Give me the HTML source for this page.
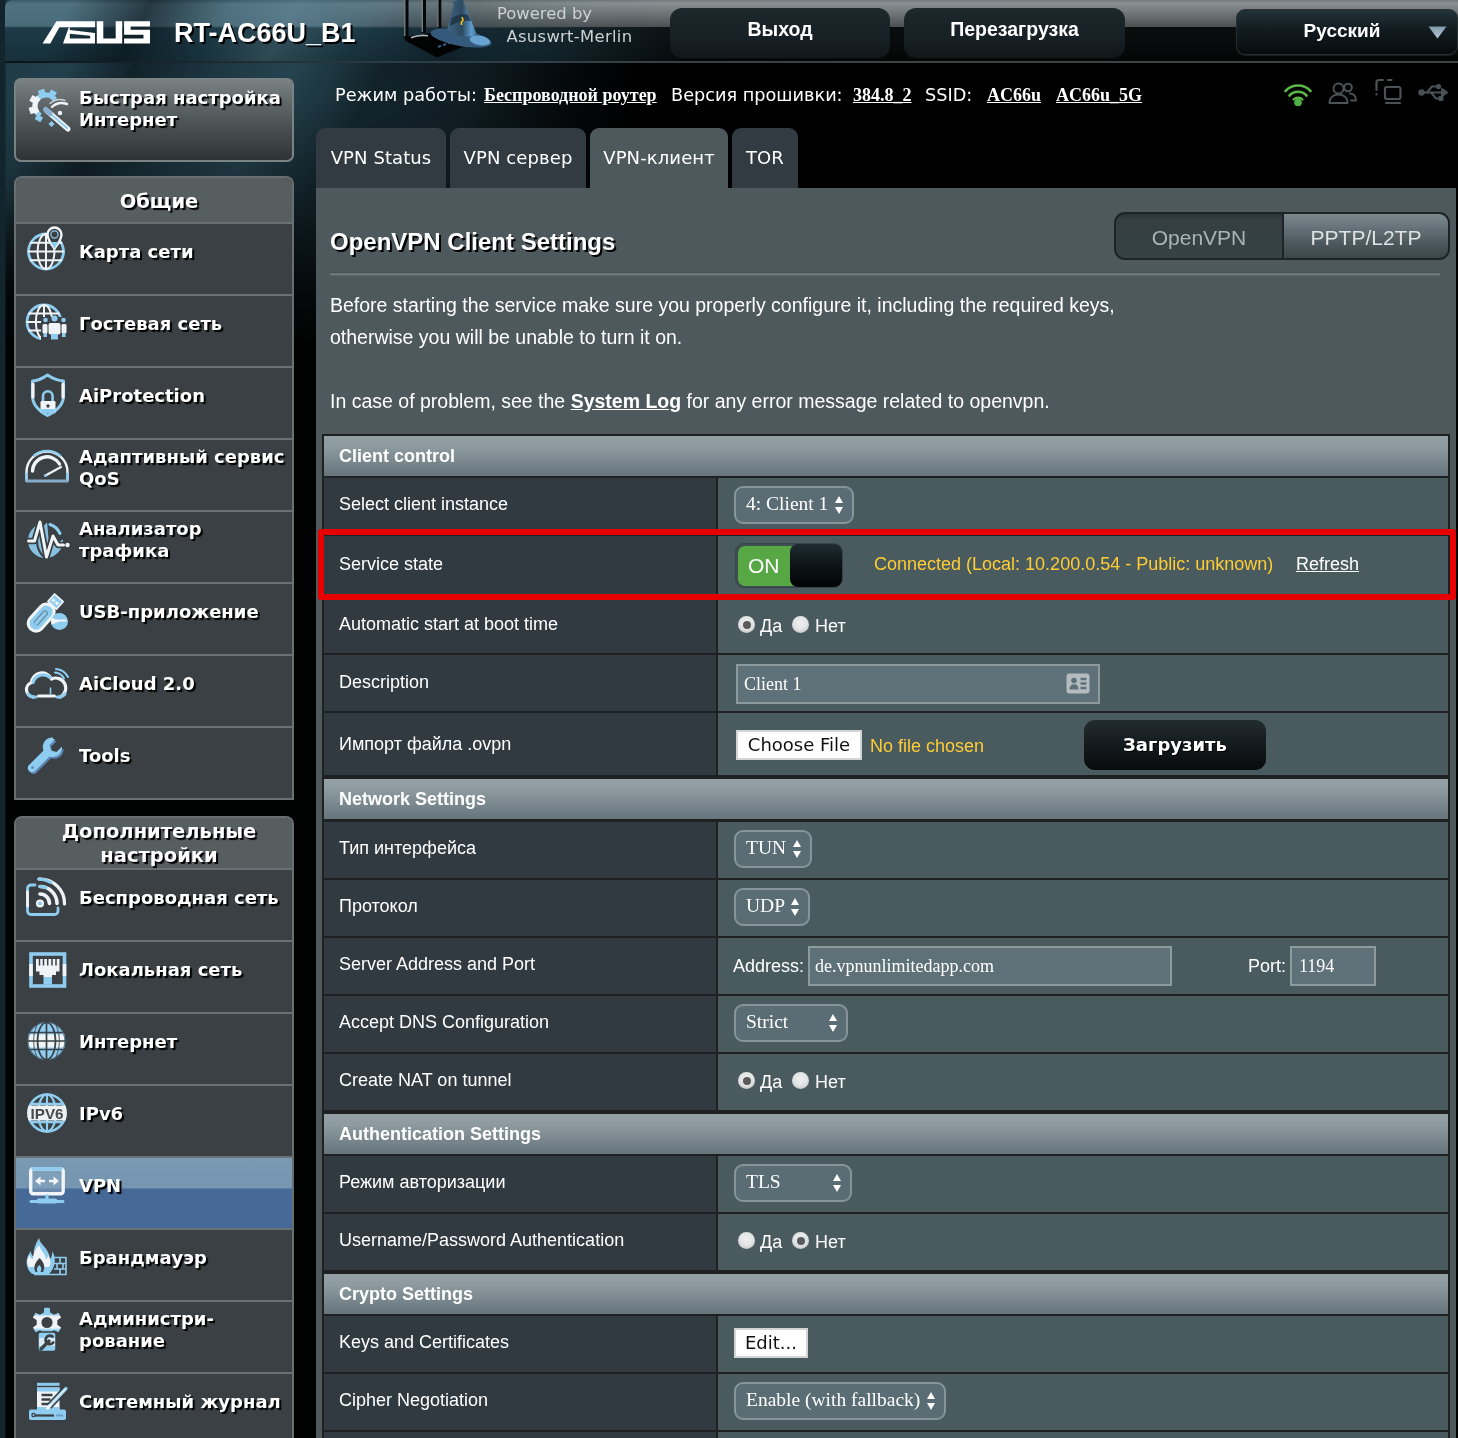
<!DOCTYPE html>
<html lang="ru">
<head>
<meta charset="utf-8">
<title>ASUS Wireless Router RT-AC66U_B1 - OpenVPN Client Settings</title>
<style>
*{box-sizing:border-box;margin:0;padding:0}
html,body{width:1458px;height:1438px;overflow:hidden;background:#0a1114}
body{position:relative;font-family:"Liberation Sans",Arial,sans-serif;color:#fff}
.abs{position:absolute}
#wrap{position:absolute;left:0;top:0;width:1458px;height:1438px;overflow:hidden;will-change:transform}
/* ---------- background ---------- */
#bg{left:0;top:0;width:1458px;height:1438px;
 background:
  linear-gradient(90deg,#13252c 0,#13252c 5px,rgba(0,0,0,0) 6px),
  linear-gradient(180deg,rgba(0,0,0,0) 0,rgba(0,0,0,0) 100px,rgba(0,0,0,.3) 200px,rgba(0,0,0,.8) 290px,#010202 350px),
  linear-gradient(90deg,rgba(0,0,0,0) 0,rgba(0,0,0,0) 330px,#000 640px),
  linear-gradient(118deg,#1d3742 0,#22404c 90px,#12222a 150px,#1e3843 230px,#25434f 290px,#152830 370px,#1c343f 470px,#0a1418 640px,#000 800px);}
#hdr{left:5px;top:0;width:1453px;height:61px;border-top-left-radius:7px;overflow:hidden;
 background:linear-gradient(180deg,#3c5a66 0,#4f7281 4px,#4a6b7a 26px,#1d3a47 28px,#17303a 61px)}
#hdrS{left:5px;top:0;width:700px;height:61px;border-top-left-radius:7px;overflow:hidden;
 background:linear-gradient(118deg,rgba(0,0,0,0) 0,rgba(0,0,0,0) 60px,rgba(5,12,16,.55) 130px,rgba(5,12,16,.0) 200px,rgba(150,180,195,.18) 260px,rgba(0,0,0,0) 330px,rgba(5,12,16,.45) 420px,rgba(0,0,0,0) 520px)}
#hdrR{left:320px;top:0;width:1138px;height:28px;
 background:linear-gradient(180deg,#70787b 0,#8b9092 3px,#6e7375 14px,#4b4f51 27px,#2a2d2e 28px);
 -webkit-mask-image:linear-gradient(90deg,transparent 0,rgba(0,0,0,.6) 120px,rgba(0,0,0,.8) 220px,#000 340px);mask-image:linear-gradient(90deg,transparent 0,rgba(0,0,0,.6) 120px,rgba(0,0,0,.8) 220px,#000 340px)}
#hdrB{left:480px;top:27px;width:978px;height:34px;
 background:linear-gradient(180deg,#0b0e0f 0,#050707 100%);
 -webkit-mask-image:linear-gradient(90deg,transparent 0,rgba(0,0,0,.5) 100px,#000 220px);mask-image:linear-gradient(90deg,transparent 0,rgba(0,0,0,.5) 100px,#000 220px)}
#hdrL{left:5px;top:61px;width:1453px;height:2px;background:linear-gradient(90deg,#0c1418 0,#2c3d45 400px,#3c4446 900px,#3c4446 100%)}
/* ---------- header ---------- */
#model{left:174px;top:15px;font-weight:bold;font-size:27px;line-height:36px;white-space:nowrap;text-shadow:2px 2px 0 #000}
#powered{left:497px;top:2px;width:136px;font-family:"DejaVu Sans",Verdana,sans-serif;font-size:16.4px;line-height:23.5px;color:#cdd1d2;text-align:left;white-space:nowrap}
.hbtn{top:8px;height:49px;border-radius:12px;background:linear-gradient(180deg,#1c272b 0,#19232700 0),linear-gradient(180deg,#1d282c 0,#172024 60%,#11181b 100%);
 font-weight:bold;font-size:19.5px;text-align:center;line-height:42px;white-space:nowrap;box-shadow:0 1px 0 rgba(255,255,255,.08)}
/* ---------- status line ---------- */
#status{left:335px;top:82px;height:26px;line-height:26px;font-family:"DejaVu Sans",Verdana,sans-serif;font-size:17.7px;white-space:nowrap}
#status span,#status a{position:absolute;top:0}
#status a{font-family:"Liberation Serif","Times New Roman",serif;font-weight:bold;font-size:18px;color:#fff;text-decoration:underline}
/* ---------- tabs ---------- */
.tab{top:128px;height:60px;background:#323b42;border-radius:9px 9px 0 0;font-family:"DejaVu Sans",Verdana,sans-serif;font-size:18px;
 line-height:60px;text-align:center;white-space:nowrap;letter-spacing:.1px}
.tab.on{background:#4d595d}
/* ---------- sidebar ---------- */
.qbox{left:14px;top:78px;width:280px;height:84px;border:2px solid #7b8284;border-radius:7px;
 background:linear-gradient(180deg,#7a8183 0,#5f6668 30%,#474e50 62%,#2e3436 100%);
 font-family:"DejaVu Sans",Verdana,sans-serif;font-weight:bold;font-size:18px;line-height:22px;text-shadow:2px 2px 1px #000}
.qbox span{position:absolute;left:63px;top:7px;white-space:nowrap}
.qbox svg{position:absolute;left:0;top:0;width:62px;height:62px}
.sbox{left:14px;width:280px;border:2px solid #686f71;border-bottom:none;border-radius:8px 8px 0 0;background:#3a4043;overflow:hidden}
.shead{width:100%;background:#575e60;font-family:"DejaVu Sans",Verdana,sans-serif;font-weight:bold;font-size:19.5px;text-align:center;line-height:24px;
 padding:12px 0 0 10px;text-shadow:2px 2px 1px #000;border-bottom:2px solid #6a7173;white-space:nowrap}
.shead.h2{padding-top:2px}
.mi{position:relative;width:100%;height:72px;border-bottom:2px solid #6a7173;font-family:"DejaVu Sans",Verdana,sans-serif;font-weight:bold;font-size:18px;
 line-height:22px;text-shadow:2px 2px 1px #000}
.mi span{position:absolute;left:63px;top:17px;white-space:nowrap}
.mi span.two{top:6px}
.mi svg{position:absolute;left:0;top:0;width:62px;height:62px}
.mi svg text{text-shadow:none}
.mi.on{background:linear-gradient(180deg,#7a9ab4 0,#7595b0 30px,#476998 31px,#476998 100%)}
/* ---------- content ---------- */
#panel{left:316px;top:188px;width:1140px;height:1250px;background:#4d595d}
#title{left:330px;top:226px;font-weight:bold;font-size:24px;line-height:32px;white-space:nowrap;text-shadow:2px 2px 0 #000}
.desc{left:330px;font-size:19.5px;line-height:32px;white-space:nowrap}
.desc a{color:#fff;font-weight:bold;text-decoration:underline}
#hr{left:330px;top:272px;width:1110px;height:4px;background:linear-gradient(180deg,#465054 0,#465054 1px,#6c797e 1px,#6c797e 3px,#586468 3px)}
/* table */
.th{left:324px;width:1124px;height:40px;background:linear-gradient(180deg,#93a1a6 0,#8e9ca1 25%,#66757c 100%);
 font-weight:bold;font-size:18px;line-height:41px;padding-left:15px;white-space:nowrap;overflow:hidden}
.lc{left:324px;width:392px;background:#323a41}
.vc{left:718px;width:730px;background:#4a5b60}
.lb{left:339px;font-size:18px;line-height:22px;white-space:nowrap}
.sel{border:2px solid #87949a;border-radius:9px;background:#5b6d74;
 font-family:"Liberation Serif","Times New Roman",serif;font-size:19.5px;line-height:31px;padding-left:10px;white-space:nowrap}
.sel i{position:absolute;right:8px;top:8px;width:9px;height:18px}
.sel i:before,.sel i:after{content:"";position:absolute;left:0;border-left:4.5px solid transparent;border-right:4.5px solid transparent}
.sel i:before{top:0;border-bottom:7px solid #fff}
.sel i:after{bottom:0;border-top:7px solid #fff}
.inp{height:40px;border:2px solid #8d9a9e;background:#5f7178;font-family:"Liberation Serif","Times New Roman",serif;font-size:18px;
 line-height:36px;padding-left:5px;white-space:nowrap}
.rad{width:17px;height:17px;border-radius:50%;background:radial-gradient(circle at 50% 40%,#f0f0f0 0,#e2e3e3 50%,#c2c5c6 85%,#9da3a5 100%)}
.rad.ck:after{content:"";position:absolute;left:4.500px;top:4.500px;width:8px;height:8px;border-radius:50%;background:#585a5b}
.rl{font-size:18px;line-height:22px;white-space:nowrap}
.wbtn{background:#fff;border:2px solid #d4d4d4;color:#111;font-family:"DejaVu Sans",Verdana,sans-serif;font-size:18px;text-align:center;white-space:nowrap}
.dbtn{border-radius:11px;background:linear-gradient(180deg,#222c30 0,#141a1d 50%,#080b0c 100%);font-family:"DejaVu Sans",Verdana,sans-serif;font-weight:bold;font-size:18px;
 text-align:center;white-space:nowrap;text-shadow:1px 1px 0 #000}
.tog{width:108px;height:45px;border-radius:9px;background:#3f4e53;border:1px solid #37454a}
.tog b{position:absolute;left:2px;top:2px;width:60px;height:40px;background:#57a845;border-radius:7px 0 0 7px;font-weight:normal;font-size:21px;line-height:40px;padding-left:10px}
.tog u{position:absolute;left:54px;top:0;width:52px;height:43px;border-radius:8px;background:linear-gradient(180deg,#1e2d33 0,#0d1316 50%,#030404 100%);text-decoration:none}
#lang{background:linear-gradient(180deg,#22333a 0,#16222700 0),linear-gradient(180deg,#22333a 0,#121b1f 45%,#080b0d 100%);border:1px solid #273035;border-radius:9px;line-height:42px;font-size:19px}
#sw{left:1114px;top:212px;width:336px;height:48px;border:2px solid #1d2427;border-radius:11px;overflow:hidden;background:#1d2427;font-size:21px;line-height:47px;text-align:center;white-space:nowrap}
#sw .a{position:absolute;left:0;top:0;width:166px;height:44px;background:linear-gradient(180deg,#283135 0,#353f43 5px,#374246 100%);color:#a9b4b8}
#sw .b{position:absolute;left:168px;top:0;width:164px;height:44px;background:linear-gradient(180deg,#7c898e 0,#66737a 30%,#4a565b 70%,#3c474b 100%);color:#dde2e4}
</style>
</head>
<body>
<div id="wrap">
<div id="bg" class="abs"></div>
<div id="hdr" class="abs"></div>
<div id="hdrS" class="abs"></div>
<div id="hdrR" class="abs"></div>
<div id="hdrB" class="abs"></div>
<div id="hdrL" class="abs"></div>

<!-- HEADER -->
<svg class="abs" style="left:42px;top:21px" width="109" height="24" viewBox="0 0 109 24">
 <g fill="#fff">
  <path d="M0.500 22.400 L14.500 0.300 H53 V6.300 H17.400 L8.300 22.400 Z"/>
  <path d="M26.800 6.300 H27.800 V9 L53 12 V22.400 H21 Z M27.800 12.800 V17.400 H48.200 V14.800 Z" fill-rule="evenodd"/>
  <path d="M54.800 0.300 H61.300 V17.400 H73.700 V0.300 H80.200 V22.400 H54.800 Z"/>
  <path d="M82.100 0.300 H108 V5.500 H88.600 V8.800 H108 V22.400 H82.100 V17.400 H101.500 V13.800 H82.100 Z"/>
 </g>
</svg>
<svg class="abs" style="left:398px;top:0" width="100" height="62" viewBox="0 0 100 62">
 <defs><linearGradient id="hatg" x1="0" y1="0" x2="1" y2="0"><stop offset="0" stop-color="#3f6685"/><stop offset=".5" stop-color="#2c4a60"/><stop offset=".82" stop-color="#5f9ccd"/><stop offset="1" stop-color="#3d6a8e"/></linearGradient></defs>
 <g stroke-linecap="butt">
  <path d="M8.500 0V38" stroke="#050708" stroke-width="4"/><path d="M6.800 0V36" stroke="#7b8589" stroke-width="1.300"/>
  <path d="M26 0V33" stroke="#050708" stroke-width="4"/><path d="M24.300 0V32" stroke="#7b8589" stroke-width="1.300"/>
  <path d="M41.500 0V28" stroke="#050708" stroke-width="3.600"/><path d="M39.900 0V27" stroke="#7b8589" stroke-width="1.200"/>
 </g>
 <path d="M6 37 L42 31.500 L67 46 L39 57.500 L8 41 Z" fill="#020303"/>
 <path d="M13 37.800 q8 -3.500 17 -2" stroke="#aeb6b9" stroke-width="1.600" fill="none"/>
 <path d="M40 47 l3 -1.200 M45 45.200 l3 -1.200 M50 43.400 l3 -1.200" stroke="#2f5d7d" stroke-width="2"/>
 <ellipse cx="63" cy="38" rx="31" ry="8" transform="rotate(10 63 38)" fill="#34597a"/>
 <ellipse cx="82" cy="40.500" rx="10.500" ry="4.800" transform="rotate(10 82 40)" fill="#74b4e6" opacity=".8"/>
 <path d="M60 0 L53 2 L56 4 L49 30 Q62 40 79 35 L65 0 Z" fill="url(#hatg)"/>
 <path d="M53.500 18 Q62 13 70 14.500 L73 21 Q62 20 52 26 Z" fill="#1d2f3d" opacity=".75"/>
 <path d="M64 17l1 3 -1.500 2 0 3" stroke="#f2c318" stroke-width="1.600" fill="none"/>
</svg>
<div id="model" class="abs">RT-AC66U_B1</div>
<div id="powered" class="abs">Powered by<br><span style="position:relative;left:9.500px;top:-1px;letter-spacing:.3px">Asuswrt-Merlin</span></div>
<div class="abs hbtn" style="left:670px;width:220px">Выход</div>
<div class="abs hbtn" style="left:904px;width:221px">Перезагрузка</div>
<div class="abs hbtn" style="left:1236px;width:222px;top:9px;height:46px;padding-right:10px" id="lang">Русский</div>
<svg class="abs" style="left:1428px;top:26px" width="19" height="13" viewBox="0 0 19 13"><defs><linearGradient id="ag" x1="0" y1="0" x2="0" y2="1"><stop offset="0" stop-color="#7f98a8"/><stop offset="1" stop-color="#b7cad6"/></linearGradient></defs><path d="M0.500 0.500H18.500L9.500 12.500Z" fill="url(#ag)"/></svg>
<svg class="abs" style="left:1282px;top:76px" width="172" height="32" viewBox="0 0 172 32" fill="none" stroke-linecap="round" stroke-linejoin="round">
 <g stroke="#5cb848" stroke-width="2.600"><path d="M3.500 15a17 17 0 0 1 25 0"/><path d="M7.500 19.500a11.500 11.500 0 0 1 17 0"/><path d="M11.500 23.500a6.500 6.500 0 0 1 9 0" stroke-width="2.200"/></g><circle cx="16" cy="26.500" r="3.800" fill="#4fb044"/>
 <g stroke="#4b5255" stroke-width="2"><circle cx="56.500" cy="12.500" r="5"/><path d="M47.500 27c0-5.500 4-8.500 9-8.500s9 3 9 8.500z"/><circle cx="66" cy="11.500" r="3.800"/><path d="M68 17.500c4 .5 6 3 6 7h-5"/></g>
 <g stroke="#4b5255" stroke-width="2.200"><path d="M101 4H97a2.500 2.500 0 0 0-2.500 2.500V14"/><path d="M106 4h3.500"/><path d="M94.500 18v.5"/><rect x="103" y="11" width="15.500" height="12" rx="2"/><path d="M104 27h14"/></g>
 <g stroke="#4b5255" stroke-width="2"><path d="M140 16.500h24"/><path d="M160 13l5 3.500-5 3.500z" fill="#4b5255"/><circle cx="139.500" cy="16.500" r="2.200" fill="#4b5255"/><path d="M145 16.500l5-6h5"/><circle cx="156.500" cy="10.500" r="1.600" fill="#4b5255"/><path d="M149 16.500l5 6h4"/><rect x="157.500" y="21" width="3" height="3" fill="#4b5255"/></g>
</svg>

<!-- STATUS -->
<div id="status" class="abs"><span style="left:0">Режим работы:</span><a style="left:149px">Беспроводной роутер</a><span style="left:336px">Версия прошивки:</span><a style="left:518px">384.8_2</a><span style="left:590px">SSID:</span><a style="left:652px">AC66u</a><a style="left:721px">AC66u_5G</a></div>

<!-- TABS -->
<div class="abs tab" style="left:316px;width:130px">VPN Status</div>
<div class="abs tab" style="left:450px;width:136px">VPN сервер</div>
<div class="abs tab on" style="left:590px;width:138px">VPN-клиент</div>
<div class="abs tab" style="left:732px;width:66px">TOR</div>

<!-- PANEL -->
<div id="panel" class="abs"></div>
<div id="title" class="abs">OpenVPN Client Settings</div>
<div id="hr" class="abs"></div>
<div id="sw" class="abs"><div class="a">OpenVPN</div><div class="b">PPTP/L2TP</div></div>
<div class="abs desc" style="top:289px">Before starting the service make sure you properly configure it, including the required keys,</div>
<div class="abs desc" style="top:321px">otherwise you will be unable to turn it on.</div>
<div class="abs desc" style="top:385px">In case of problem, see the <a>System Log</a> for any error message related to openvpn.</div>

<div class="abs" style="left:322px;top:434px;width:1128px;height:1004px;background:#1e2021"></div>
<div class="abs th" style="top:436px">Client control</div>
<div class="abs lc" style="top:478px;height:56px"></div><div class="abs vc" style="top:478px;height:56px"></div>
<div class="abs lb" style="top:492.5px">Select client instance</div>
<div class="abs sel" style="left:734px;top:486px;width:120px;height:38px">4: Client 1<i></i></div>
<div class="abs lc" style="top:536px;height:59px"></div><div class="abs vc" style="top:536px;height:59px"></div>
<div class="abs lb" style="top:552.5px">Service state</div>
<div class="abs tog" style="left:735px;top:543px"><b>ON</b><u></u></div><div class="abs lb" style="left:874px;top:552.5px;color:#ffcc33">Connected (Local: 10.200.0.54 - Public: unknown)</div><div class="abs lb" style="left:1296px;top:552.5px;text-decoration:underline">Refresh</div>
<div class="abs lc" style="top:597px;height:56px"></div><div class="abs vc" style="top:597px;height:56px"></div>
<div class="abs lb" style="top:613px">Automatic start at boot time</div>
<div class="abs rad ck" style="left:738px;top:616px"></div><div class="abs rl" style="left:760px;top:614.5px">Да</div><div class="abs rad" style="left:792px;top:616px"></div><div class="abs rl" style="left:815px;top:614.5px">Нет</div>
<div class="abs lc" style="top:655px;height:56px"></div><div class="abs vc" style="top:655px;height:56px"></div>
<div class="abs lb" style="top:670.5px">Description</div>
<div class="abs inp" style="left:736px;top:664px;width:364px;padding-left:6px">Client 1</div><svg class="abs" style="left:1066px;top:673px" width="24" height="21" viewBox="0 0 24 21"><rect x="0.500" y="0.500" width="23" height="20" rx="3" fill="#b4bcbf"/><rect x="2.500" y="2.500" width="19" height="16" rx="1" fill="none" stroke="#5f7178" stroke-width="0"/><circle cx="8" cy="7.500" r="2.800" fill="#5f7178"/><path d="M3.500 16.500c0-3.600 2-5.200 4.500-5.200s4.500 1.600 4.500 5.200z" fill="#5f7178"/><path d="M14.500 6h6M14.500 10.500h6M14.500 15h6" stroke="#5f7178" stroke-width="2.400"/></svg>
<div class="abs lc" style="top:713px;height:62px"></div><div class="abs vc" style="top:713px;height:62px"></div>
<div class="abs lb" style="top:733px">Импорт файла .ovpn</div>
<div class="abs wbtn" style="left:736px;top:730px;width:126px;height:30px;line-height:26px">Choose File</div><div class="abs lb" style="left:870px;top:735px;color:#ffcc33">No file chosen</div><div class="abs dbtn" style="left:1084px;top:720px;width:182px;height:50px;line-height:50px">Загрузить</div>
<div class="abs th" style="top:779px">Network Settings</div>
<div class="abs lc" style="top:822px;height:56px"></div><div class="abs vc" style="top:822px;height:56px"></div>
<div class="abs lb" style="top:836.5px">Тип интерфейса</div>
<div class="abs sel" style="left:734px;top:830px;width:78px;height:38px">TUN<i></i></div>
<div class="abs lc" style="top:880px;height:56px"></div><div class="abs vc" style="top:880px;height:56px"></div>
<div class="abs lb" style="top:894.5px">Протокол</div>
<div class="abs sel" style="left:734px;top:888px;width:76px;height:38px">UDP<i></i></div>
<div class="abs lc" style="top:938px;height:56px"></div><div class="abs vc" style="top:938px;height:56px"></div>
<div class="abs lb" style="top:952.5px">Server Address and Port</div>
<div class="abs lb" style="left:733px;top:954.5px">Address:</div><div class="abs inp" style="left:808px;top:946px;width:364px">de.vpnunlimitedapp.com</div><div class="abs lb" style="left:1248px;top:954.5px">Port:</div><div class="abs inp" style="left:1290px;top:946px;width:86px;padding-left:7px">1194</div>
<div class="abs lc" style="top:996px;height:56px"></div><div class="abs vc" style="top:996px;height:56px"></div>
<div class="abs lb" style="top:1010.5px">Accept DNS Configuration</div>
<div class="abs sel" style="left:734px;top:1004px;width:114px;height:38px">Strict<i></i></div>
<div class="abs lc" style="top:1054px;height:56px"></div><div class="abs vc" style="top:1054px;height:56px"></div>
<div class="abs lb" style="top:1068.5px">Create NAT on tunnel</div>
<div class="abs rad ck" style="left:738px;top:1072px"></div><div class="abs rl" style="left:760px;top:1070.5px">Да</div><div class="abs rad" style="left:792px;top:1072px"></div><div class="abs rl" style="left:815px;top:1070.5px">Нет</div>
<div class="abs th" style="top:1114px">Authentication Settings</div>
<div class="abs lc" style="top:1156px;height:56px"></div><div class="abs vc" style="top:1156px;height:56px"></div>
<div class="abs lb" style="top:1170.5px">Режим авторизации</div>
<div class="abs sel" style="left:734px;top:1164px;width:118px;height:38px">TLS<i></i></div>
<div class="abs lc" style="top:1214px;height:56px"></div><div class="abs vc" style="top:1214px;height:56px"></div>
<div class="abs lb" style="top:1228.5px">Username/Password Authentication</div>
<div class="abs rad" style="left:738px;top:1232px"></div><div class="abs rl" style="left:760px;top:1230.5px">Да</div><div class="abs rad ck" style="left:792px;top:1232px"></div><div class="abs rl" style="left:815px;top:1230.5px">Нет</div>
<div class="abs th" style="top:1274px">Crypto Settings</div>
<div class="abs lc" style="top:1316px;height:56px"></div><div class="abs vc" style="top:1316px;height:56px"></div>
<div class="abs lb" style="top:1330.5px">Keys and Certificates</div>
<div class="abs wbtn" style="left:734px;top:1328px;width:74px;height:30px;line-height:26px">Edit...</div>
<div class="abs lc" style="top:1374px;height:56px"></div><div class="abs vc" style="top:1374px;height:56px"></div>
<div class="abs lb" style="top:1388.5px">Cipher Negotiation</div>
<div class="abs sel" style="left:734px;top:1382px;width:212px;height:38px">Enable (with fallback)<i></i></div>
<div class="abs lc" style="top:1432px;height:10px"></div><div class="abs vc" style="top:1432px;height:10px"></div>
<div class="abs lb" style="top:1483px"></div>

<div class="abs" style="left:318px;top:529px;width:1138px;height:71px;border:6px solid #e60000;border-radius:3px"></div>
<div class="abs qbox"><svg viewBox="0 0 62 62" fill="none" stroke-linecap="round" stroke-linejoin="round"><path d="M39.0 19.7A11 11 0 1 0 24.5 35.5" stroke="#8fcdf0" stroke-width="5" stroke-linecap="butt"/><path d="M35.4 15.8L38.0 11.0M26.6 15.0L25.0 9.7M19.8 20.6L15.0 18.0M19.0 29.4L13.7 31.0M24.2 36.0L21.5 40.7" stroke="#8fcdf0" stroke-width="6.500" stroke-linecap="butt"/><path d="M22.9 17.6A11 11 0 0 0 21.3 32.8" stroke="#f0f4f6" stroke-width="5" stroke-linecap="butt"/><path d="M19.8 20.6L15.0 18.0M19.0 29.4L13.7 31.0" stroke="#f0f4f6" stroke-width="6.500" stroke-linecap="butt"/><path d="M30 30 L52 49" stroke="#f0f4f6" stroke-width="5"/><path d="M34 33.500 L51 48" stroke="#8fcdf0" stroke-width="2"/><path d="M29.500 29.500l4.500 4" stroke="#86add2" stroke-width="5"/><path d="M36 27 q6 -6 15 -3" stroke="#f0f4f6" stroke-width="2.400"/><path d="M34 23.500 q7 -6 15 -3" stroke="#c9d3d8" stroke-width="1.400"/><circle cx="44" cy="33" r="2.200" fill="#f0f4f6"/><path d="M32.500 44l3 -3 3 3 -3 3z" fill="#8fcdf0"/></svg><span class="two">Быстрая настройка<br>Интернет</span></div>
<div class="abs sbox" style="top:176px;height:624px"><div class="shead" style="height:46px">Общие</div><div class="mi"><svg viewBox="0 0 62 62" fill="none" stroke-linecap="round" stroke-linejoin="round"><circle cx="30" cy="27.5" r="17.5" stroke="#8fcdf0" stroke-width="2.8"/><ellipse cx="30" cy="27.5" rx="8.4" ry="17.5" stroke="#f0f4f6" stroke-width="2"/><path d="M30 10.0V45.0M12.5 27.5H47.5M14.8 18.8H45.2M14.8 36.2H45.2" stroke="#f0f4f6" stroke-width="2"/><path d="M38.500 3.500a7 7 0 0 1 7 7c0 5-7 14-7 14s-7-9-7-14a7 7 0 0 1 7-7z" fill="#3a4043" stroke="#f0f4f6" stroke-width="2.400"/><path d="M34.500 18l4 6.500 4-6.500z" fill="#8fcdf0"/><circle cx="38.500" cy="10.500" r="3.600" fill="#3a4043" stroke="#8fcdf0" stroke-width="1.200"/></svg><span>Карта сети</span></div><div class="mi"><svg viewBox="0 0 62 62" fill="none" stroke-linecap="round" stroke-linejoin="round"><circle cx="28" cy="26" r="17" stroke="#8fcdf0" stroke-width="2.8"/><ellipse cx="28" cy="26" rx="8.2" ry="17" stroke="#f0f4f6" stroke-width="2"/><path d="M28 9V43M11 26H45M13.2 17.5H42.8M13.2 34.5H42.8" stroke="#f0f4f6" stroke-width="2"/><rect x="25" y="21" width="28" height="24" fill="#3a4043"/><g><circle cx="38.500" cy="22.500" r="3" fill="#8fcdf0"/><rect x="32.500" y="27" width="12" height="11.500" rx="2" fill="#f0f4f6"/><rect x="35" y="38" width="7" height="5.500" fill="#8fcdf0"/><circle cx="29.500" cy="24" r="2.300" fill="#8fcdf0"/><rect x="26.500" y="28" width="5" height="9.500" rx="1.500" fill="#f0f4f6"/><rect x="27.500" y="37" width="3.500" height="4" fill="#8fcdf0"/><circle cx="47.500" cy="24" r="2.300" fill="#8fcdf0"/><rect x="45.500" y="28" width="5" height="9.500" rx="1.500" fill="#f0f4f6"/><rect x="46" y="37" width="3.500" height="4" fill="#8fcdf0"/></g></svg><span>Гостевая сеть</span></div><div class="mi"><svg viewBox="0 0 62 62" fill="none" stroke-linecap="round" stroke-linejoin="round"><path d="M31.500 7c5 3.500 10 5.500 16 6v15c0 9-7 15-16 19.500C23 43 16.500 37 16.500 28V13c6-.5 10-2.500 15-6z" stroke="#8fcdf0" stroke-width="3"/><path d="M17 16v13M47 16v13" stroke="#f0f4f6" stroke-width="3.200"/><path d="M27 33v-5a4.800 4.800 0 0 1 9.600 0v5" stroke="#8fcdf0" stroke-width="2.600"/><rect x="24.500" y="33" width="15" height="12" rx="1.200" fill="#f0f4f6"/><rect x="24.500" y="41" width="15" height="4.500" rx="1" fill="#8fcdf0"/><circle cx="32" cy="38" r="1.700" fill="#3a4043"/></svg><span>AiProtection</span></div><div class="mi"><svg viewBox="0 0 62 62" fill="none" stroke-linecap="round" stroke-linejoin="round"><path d="M10.500 40V32a20.500 20.500 0 0 1 41 0v8" stroke="#f0f4f6" stroke-width="2.400"/><path d="M10.500 41V34M51.500 41V34" stroke="#8fcdf0" stroke-width="2.600"/><path d="M18 15.500a20.500 20.500 0 0 1 26 0" stroke="#8fcdf0" stroke-width="2.400"/><path d="M11 41h40" stroke="#86abc9" stroke-width="3"/><path d="M16.500 31a14.500 14.500 0 0 1 27-7" stroke="#f0f4f6" stroke-width="3.400"/><path d="M29.500 35.500L45 27" stroke="#f0f4f6" stroke-width="2.200"/><circle cx="29.500" cy="35.500" r="1.600" fill="#8fcdf0"/></svg><span class="two">Адаптивный сервис<br>QoS</span></div><div class="mi"><svg viewBox="0 0 62 62" fill="none" stroke-linecap="round" stroke-linejoin="round"><circle cx="29.500" cy="28.500" r="17.500" fill="#8fcdf0" opacity=".92"/><path d="M29 11c-6 6-8 12-8 18s2 12 8 17M33 11.500c5 5 8 10 8 14" stroke="#3a4043" stroke-width="2.200"/><path d="M31 9 L49 9 L49 26 L43 30 L38 22 L33 33 Z" fill="#3a4043"/><path d="M34 12.500a17 17 0 0 1 10 9" stroke="#8fcdf0" stroke-width="3"/><path d="M12 29h6.500l5.500-19 6.500 35 6.500-21 5 9h5" stroke="#3a4043" stroke-width="6.500"/><path d="M12.500 29h6l5.500-19 6.500 35 6.500-21 5 9h5.500" stroke="#f0f4f6" stroke-width="3"/><circle cx="51.500" cy="33" r="2.200" fill="#f0f4f6"/></svg><span class="two">Анализатор<br>трафика</span></div><div class="mi"><svg viewBox="0 0 62 62" fill="none" stroke-linecap="round" stroke-linejoin="round"><g transform="rotate(-48 28 30)"><rect x="8" y="22.500" width="31" height="15.500" rx="7.500" fill="#8fcdf0" stroke="#f0f4f6" stroke-width="3"/><rect x="14" y="27.500" width="18" height="5.500" rx="2.700" fill="#3a4043" opacity=".55"/><rect x="14" y="28.500" width="17" height="3.500" rx="1.700" fill="#8fcdf0"/><rect x="40" y="24.500" width="10" height="11.500" fill="#8fcdf0" stroke="#f0f4f6" stroke-width="1.600"/><rect x="43" y="26.500" width="3" height="3" fill="#f0f4f6"/><rect x="43" y="31" width="3" height="3" fill="#f0f4f6"/></g><circle cx="43.500" cy="37.500" r="8.500" fill="#8fcdf0"/><path d="M43.500 37.500L36 33.500a8.500 8.500 0 0 0 -.5 7z" fill="#f0f4f6"/><path d="M36.500 36.500h13" stroke="#f0f4f6" stroke-width="2"/></svg><span>USB-приложение</span></div><div class="mi"><svg viewBox="0 0 62 62" fill="none" stroke-linecap="round" stroke-linejoin="round"><path d="M17 41a7.500 7.500 0 0 1-1.500-14.500 10.500 10.500 0 0 1 20-3.500 8.500 8.500 0 0 1 8.500 18" stroke="#f0f4f6" stroke-width="3.200"/><path d="M17 41h3M41 41h3M17 26.500a10.500 10.500 0 0 1 17-5" stroke="#8fcdf0" stroke-width="3.200"/><path d="M12 38a7.500 7.500 0 0 0 5 3M49 38a8 8 0 0 1-5 3" stroke="#8fcdf0" stroke-width="3.200"/><path d="M22.500 40h16" stroke="#f0f4f6" stroke-width="3"/><path d="M34.500 38v-6" stroke="#8fcdf0" stroke-width="1.600"/><path d="M39 16.500a11 11 0 0 1 9 6M40 13a15 15 0 0 1 12 8" stroke="#8fcdf0" stroke-width="2"/></svg><span>AiCloud 2.0</span></div><div class="mi"><svg viewBox="0 0 62 62" fill="none" stroke-linecap="round" stroke-linejoin="round"><path d="M37 9.500a9.500 9.500 0 0 0-9.500 13L13 37a4 4 0 0 0 6 6l14.500-14.500a9.500 9.500 0 0 0 12.500-10l-5.500 5.500-5.500-1.500-1.500-5.500 5.500-5.500a9 9 0 0 0-2-.5z" fill="#5b84b4" transform="translate(1.500 1.800)"/><path d="M37 9.500a9.500 9.500 0 0 0-9.500 13L13 37a4 4 0 0 0 6 6l14.500-14.500a9.500 9.500 0 0 0 12.500-10l-5.500 5.500-5.500-1.500-1.500-5.500 5.500-5.500a9 9 0 0 0-2-.5z" fill="#8fcdf0"/><circle cx="16.500" cy="39.500" r="1.300" fill="#5b84b4"/></svg><span>Tools</span></div></div>
<div class="abs sbox" style="top:816px;height:640px"><div class="shead h2" style="height:52px">Дополнительные<br>настройки</div><div class="mi"><svg viewBox="0 0 62 62" fill="none" stroke-linecap="round" stroke-linejoin="round"><path d="M19 15H15a3.500 3.500 0 0 0-3.500 3.500V41a3.500 3.500 0 0 0 3.500 3.500H38.500A3.500 3.500 0 0 0 42 41V38" stroke="#8fcdf0" stroke-width="2.800"/><path d="M11.500 22v14" stroke="#f0f4f6" stroke-width="2.800"/><circle cx="24" cy="33.500" r="4" fill="#f0f4f6"/><circle cx="24" cy="33.500" r="2" fill="#8fcdf0"/><path d="M24 24a9.500 9.500 0 0 1 9.500 9.500" stroke="#f0f4f6" stroke-width="3.600"/><path d="M24 16.500a17 17 0 0 1 17 17" stroke="#f0f4f6" stroke-width="3.600"/><path d="M23 9a24.500 24.500 0 0 1 25.500 25" stroke="#f0f4f6" stroke-width="3.200"/><path d="M23 9a24.500 24.500 0 0 1 12 3.500M24 16.500a17 17 0 0 1 6 1.200" stroke="#8fcdf0" stroke-width="3.200"/></svg><span>Беспроводная сеть</span></div><div class="mi"><svg viewBox="0 0 62 62" fill="none" stroke-linecap="round" stroke-linejoin="round"><rect x="15" y="12" width="33.500" height="32" stroke="#8fcdf0" stroke-width="3.600" stroke-linejoin="miter"/><path d="M15 22v12M48.500 22v12" stroke="#f0f4f6" stroke-width="3.600" stroke-linecap="butt"/><path d="M20 17h23.500v12.500h-3.500v3.500h-4v2h-8.500v-2h-4v-3.500H20z" fill="#f0f4f6"/><path d="M23.500 17v6.500M27.500 17v6.500M31.700 17v6.500M36 17v6.500M40 17v6.500" stroke="#3a4043" stroke-width="1.500" stroke-linecap="butt"/><rect x="27.500" y="35" width="8.500" height="7.500" fill="#8fcdf0"/></svg><span>Локальная сеть</span></div><div class="mi"><svg viewBox="0 0 62 62" fill="none" stroke-linecap="round" stroke-linejoin="round"><circle cx="30.500" cy="27" r="18.500" fill="#8fcdf0"/><path d="M12.500 20.500h36v13h-36z" fill="#f0f4f6"/><circle cx="30.500" cy="27" r="18.500" stroke="#5a7f9c" stroke-width="1.200"/><path d="M30.500 8.500v37M12 27h37M14.500 18.500h32M14.500 35.500h32" stroke="#3a4043" stroke-width="1.700"/><ellipse cx="30.500" cy="27" rx="9" ry="18.500" stroke="#3a4043" stroke-width="1.700"/><path d="M21 10.500q-7 16.500 0 33M40 10.500q7 16.500 0 33" stroke="#3a4043" stroke-width="1.200" opacity=".7"/></svg><span>Интернет</span></div><div class="mi"><svg viewBox="0 0 62 62" fill="none" stroke-linecap="round" stroke-linejoin="round"><circle cx="31" cy="27" r="18.5" stroke="#8fcdf0" stroke-width="2.6"/><ellipse cx="31" cy="27" rx="8.9" ry="18.5" stroke="#8fcdf0" stroke-width="2.2"/><path d="M31 8.5V45.5M12.5 27H49.5M14.9 17.8H47.1M14.9 36.2H47.1" stroke="#8fcdf0" stroke-width="2.2"/><path d="M12.500 19.500h37q2.500 7.500 0 15h-37q-2.500-7.500 0-15z" fill="#eef1f2"/><text x="31" y="33" text-anchor="middle" font-family="Liberation Sans,Arial,sans-serif" font-weight="bold" font-size="15" fill="#444a4d" stroke="none" textLength="33" lengthAdjust="spacingAndGlyphs">IPV6</text></svg><span>IPv6</span></div><div class="mi on"><svg viewBox="0 0 62 62" fill="none" stroke-linecap="round" stroke-linejoin="round"><rect x="14.700" y="10.700" width="32.500" height="25" rx="2.500" fill="#86a5c0" fill-opacity=".55" stroke="#f0f4f6" stroke-width="3.400"/><path d="M17 10.700h28" stroke="#8fcdf0" stroke-width="3.400"/><path d="M23 23h6M33 23h6" stroke="#f0f4f6" stroke-width="2.600" stroke-linecap="butt"/><path d="M24.500 18.500l-5.500 4.500 5.500 4.500zM37.500 18.500l5.500 4.500-5.500 4.500z" fill="#f0f4f6"/><path d="M31 37.500v5" stroke="#8fcdf0" stroke-width="3"/><path d="M15 43.500h32" stroke="#8fcdf0" stroke-width="3"/><path d="M23 43h16" stroke="#8fcdf0" stroke-width="5"/></svg><span>VPN</span></div><div class="mi"><svg viewBox="0 0 62 62" fill="none" stroke-linecap="round" stroke-linejoin="round"><path d="M23 8c1 7 10 10 11 21 2-2 2.500-5 2-8 5 7 3 17-3 23H16C9 38 9 28 15 21c0 3 1 5 3 6-1-8 2-14 5-19z" fill="#8fcdf0"/><path d="M23 15c1 5 6 8 7 14 1 0 2-2 2-4 3 5 3 9 1 12H13c-3-4-2-9 1-12 0 2 1 4 3 4 0-6 3-10 6-14z" fill="#f0f4f6"/><path d="M13 37h20c-1 3-3 5-5 7H17c-2-2-3.500-4-4-7z" fill="#8fcdf0"/><path d="M23.500 28c3.500 3.500 6.500 8 3.500 14h-7.500c-3-5.500.5-10.500 4-14z" fill="#3a4043"/><path d="M23.500 35c1.800 2 2.500 4.500 1 7h-3c-1.500-2.500-.5-5 2-7z" fill="#8fcdf0"/><g stroke="#8fcdf0" stroke-width="1.600" stroke-linecap="butt"><path d="M37.500 27.500h12.500v17H18"/><path d="M38 33.500h12M38 39h12M44 27.500v6M41 33.500v5.500M47 33.500v5.500M44 39v5.500"/></g></svg><span>Брандмауэр</span></div><div class="mi"><svg viewBox="0 0 62 62" fill="none" stroke-linecap="round" stroke-linejoin="round"><defs><linearGradient id="gg" x1="0" y1="0" x2="0" y2="1"><stop offset=".22" stop-color="#8fcdf0"/><stop offset=".3" stop-color="#f0f4f6"/><stop offset=".68" stop-color="#f0f4f6"/><stop offset=".76" stop-color="#8fcdf0"/></linearGradient></defs><path d="M27.8 10.5L28.3 5.7L33.7 5.7L34.2 10.5L38.0 12.7L42.5 10.8L45.1 15.4L41.3 18.3L41.3 22.7L45.1 25.6L42.5 30.2L38.0 28.3L34.2 30.5L33.7 35.3L28.3 35.3L27.8 30.5L24.0 28.3L19.5 30.2L16.9 25.6L20.7 22.7L20.7 18.3L16.9 15.4L19.5 10.8L24.0 12.7Z" fill="url(#gg)"/><path d="M16 26h30v7H16z" fill="#8fcdf0" opacity=".0"/><circle cx="31" cy="20.500" r="5.600" fill="#3a4043"/><rect x="22" y="30" width="18" height="19.500" rx="2.500" fill="#8fcdf0" stroke="#3a4043" stroke-width="1.400"/><rect x="23" y="36" width="16" height="8" fill="#f0f4f6" opacity=".75"/><path d="M25 47l8-8" stroke="#3a4043" stroke-width="3.200"/><path d="M36.500 34.500a4.300 4.300 0 1 0 .8 6" stroke="#3a4043" stroke-width="2.800"/></svg><span class="two">Администри-<br>рование</span></div><div class="mi"><svg viewBox="0 0 62 62" fill="none" stroke-linecap="round" stroke-linejoin="round"><rect x="21" y="8.800" width="22.500" height="3" fill="#8fcdf0"/><rect x="21" y="13.500" width="22.500" height="25" fill="#f0f4f6"/><rect x="21" y="13.500" width="22.500" height="4" fill="#8fcdf0"/><rect x="21" y="33" width="22.500" height="5.500" fill="#8fcdf0"/><path d="M25.500 21h11M25.500 25.500h9M25.500 30h7" stroke="#3a4043" stroke-width="2.400" stroke-linecap="butt"/><path d="M50 14.500L33 32.500" stroke="#3a4043" stroke-width="6.500" stroke-linecap="butt"/><path d="M50 14.500L34 31.500" stroke="#8fcdf0" stroke-width="3.400"/><path d="M49 15.500L34.500 31" stroke="#f0f4f6" stroke-width="1.200"/><path d="M34 31.500l-2.500 3" stroke="#f0f4f6" stroke-width="3"/><rect x="13" y="35.500" width="37" height="10.500" rx="2" fill="#8fcdf0"/><rect x="21" y="33.500" width="22.500" height="5" fill="#f0f4f6" opacity=".0"/><path d="M19 41.500h19" stroke="#3a4043" stroke-width="2.200" stroke-linecap="butt"/><circle cx="17.500" cy="41" r="1.600" stroke="#3a4043" stroke-width="1.200"/><path d="M40 41.500h7" stroke="#6f9cc0" stroke-width="2" stroke-linecap="butt"/></svg><span>Системный журнал</span></div></div>
</div>
</body>
</html>
